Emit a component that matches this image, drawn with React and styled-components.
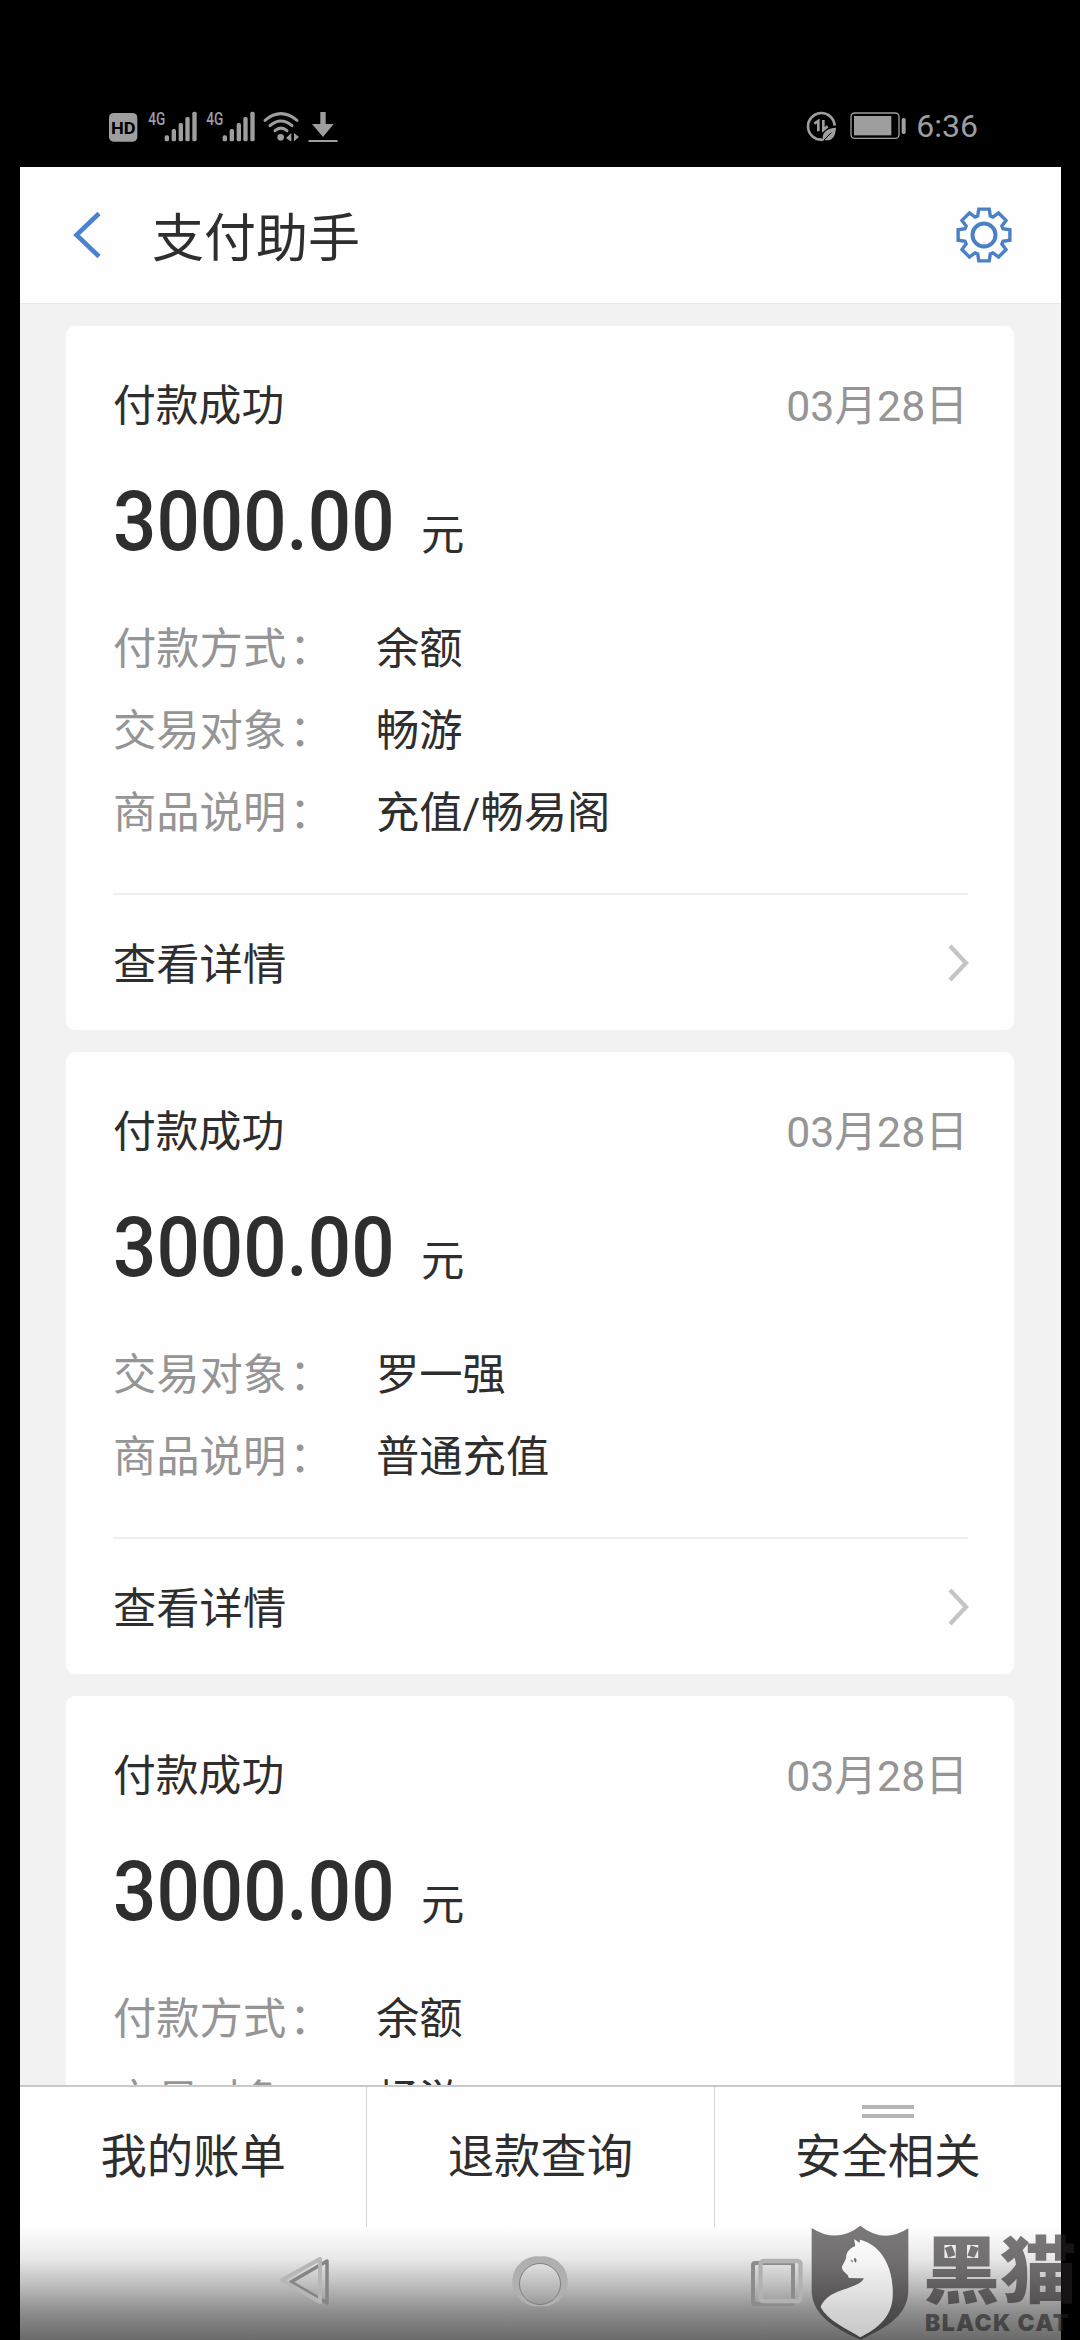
import React from 'react'
import styled, { createGlobalStyle } from 'styled-components'

const cards = [
  {
    date: '03月28日',
    amount: '3000.00',
    rows: [
      ['付款方式', '余额'],
      ['交易对象', '畅游'],
      ['商品说明', '充值/畅易阁'],
    ],
  },
  {
    date: '03月28日',
    amount: '3000.00',
    rows: [
      ['交易对象', '罗一强'],
      ['商品说明', '普通充值'],
    ],
  },
  {
    date: '03月28日',
    amount: '3000.00',
    rows: [
      ['付款方式', '余额'],
      ['交易对象', '畅游'],
    ],
  },
]

const gearPath = () => {
  const teeth = 8
  const points = []
  for (let i = 0; i < teeth; i++) {
    const mid = (i * 2 * Math.PI) / teeth
    const corners = [
      [-0.32, 20],
      [-0.2, 26.4],
      [0.2, 26.4],
      [0.32, 20],
    ]
    corners.forEach(([a, r]) => {
      points.push(`${(28 + r * Math.sin(mid + a)).toFixed(2)} ${(28 - r * Math.cos(mid + a)).toFixed(2)}`)
    })
  }
  return `M${points.join('L')}Z`
}

const Signal = () => (
  <svg width="49" height="31" viewBox="172 60 147 93" fill="#9e9e9e">
    <text x="173" y="101" fontSize="53" fontFamily="Roboto, sans-serif" fontWeight="500" textLength="51" lengthAdjust="spacingAndGlyphs">4G</text>
    <rect x="222" y="133" width="13" height="18" rx="5" />
    <rect x="243" y="114" width="13" height="37" rx="5" />
    <rect x="264" y="96" width="13" height="55" rx="5" />
    <rect x="284" y="78" width="13" height="73" rx="5" />
    <rect x="305" y="62" width="13" height="89" rx="5" />
  </svg>
)

export default function App() {
  return (
    <>
      <GlobalStyle />
      <Phone>
        <StatusBar>
          <StatusGroup $gap={9.5}>
            <svg width="29" height="31" viewBox="57 60 87 93">
              <rect x="57" y="66" width="85" height="86" rx="14" fill="#9e9e9e" />
              <text x="63" y="128" fontSize="51" fontFamily="Roboto, sans-serif" fontWeight="700" textLength="74" lengthAdjust="spacingAndGlyphs" fill="#000">HD</text>
            </svg>
            <Signal />
            <Signal />
            <WifiIcon width="36" height="31" viewBox="519 60 108 93" fill="none" stroke="#9e9e9e" strokeWidth="9" strokeLinecap="round">
              <path d="M525 88Q573 48 621 88" />
              <path d="M540 104Q573 76 606 104" />
              <path d="M555 119Q573 104 591 119" />
              <circle cx="572" cy="139" r="10" fill="#9e9e9e" stroke="none" />
              <path d="M604 126V152L588 141ZM612 126L627 138L612 151Z" fill="#9e9e9e" stroke="none" />
            </WifiIcon>
            <svg width="30" height="31" viewBox="653 60 90 93" fill="#9e9e9e">
              <path d="M690 63H706V99H730L698 138L665 99H690Z" />
              <rect x="654" y="147" width="88" height="6" rx="2" />
            </svg>
          </StatusGroup>
          <StatusGroup $gap={13}>
            <svg width="31" height="31" viewBox="74 61 93 93" fill="none" stroke="#9e9e9e" strokeWidth="8">
              <path d="M160 105A40 40 0 1 0 123 147" />
              <path d="M99 99L111 91V122M126 88V118L139 107" />
              <path d="M164 111C139 112 124 124 124 141L121 152L130 148C153 153 163 136 164 111Z" fill="#9e9e9e" stroke="none" />
              <path d="M128 148L150 126" stroke="#000" strokeWidth="3" />
            </svg>
            <svg width="57" height="28" viewBox="206 67 171 84" fill="#9e9e9e">
              <rect x="209" y="70" width="144" height="76" rx="11" fill="none" stroke="#9e9e9e" strokeWidth="4" />
              <rect x="218" y="79" width="112" height="58" />
              <rect x="361" y="85" width="12" height="48" rx="5" />
            </svg>
            <Clock>6:36</Clock>
          </StatusGroup>
        </StatusBar>
        <Screen>
          <Header>
            <svg width="28" height="44" viewBox="0 0 28 44">
              <path d="M26 .5L3.5 22L26 43.5" fill="none" stroke="#4a82d0" strokeWidth="4.6" />
            </svg>
            <Title>支付助手</Title>
            <svg width="56" height="56" viewBox="0 0 56 56" fill="none" stroke="#4a80c4" strokeWidth="3.4">
              <path d={gearPath()} />
              <circle cx="28" cy="28" r="11.5" strokeWidth="4" />
            </svg>
          </Header>
          <List>
            {cards.map((card, i) => (
              <Card key={i}>
                <CardTop>
                  <span>付款成功</span>
                  <DateText>{card.date}</DateText>
                </CardTop>
                <Amount>
                  <strong>{card.amount}</strong>
                  <span>元</span>
                </Amount>
                <Rows>
                  {card.rows.map(([label, value]) => (
                    <Row key={label}>
                      <Label>
                        {label}
                        <Colon>：</Colon>
                      </Label>
                      <span>{value}</span>
                    </Row>
                  ))}
                </Rows>
                <Detail>
                  <DetailText>查看详情</DetailText>
                  <svg width="22" height="38" viewBox="0 0 22 38">
                    <path d="M4 2L20 19L4 36" fill="none" stroke="#c4c4c4" strokeWidth="4.2" />
                  </svg>
                </Detail>
              </Card>
            ))}
          </List>
          <Tabs>
            <Tab>我的账单</Tab>
            <Tab>退款查询</Tab>
            <Tab>
              <Handle />
              安全相关
            </Tab>
          </Tabs>
          <NavBar>
            <svg width="52" height="54" viewBox="0 0 52 54" fill="none" strokeLinejoin="round">
              <path d="M13 30L49 9V51Z" stroke="#858585" strokeWidth="3.5" />
              <path d="M4 28L42 7V50Z" stroke="#b6b6b6" strokeWidth="4" />
            </svg>
            <svg width="50" height="54" viewBox="0 0 50 54">
              <path
                fillRule="evenodd"
                fill="#b0b0b0"
                d="M25 4.5A25 25 0 1 0 25 54.2A25 25 0 1 0 25 4.5ZM25 11.5A20.5 20.5 0 1 1 25 52.5A20.5 20.5 0 1 1 25 11.5Z"
              />
              <circle cx="25" cy="32" r="20.5" fill="none" stroke="#808080" strokeWidth="1" />
            </svg>
            <svg width="54" height="54" viewBox="0 0 54 54" fill="none">
              <rect x="3" y="11" width="40" height="41" rx="2" stroke="#8c8c8c" strokeWidth="4" />
              <rect x="10.5" y="9" width="40" height="40" rx="3" stroke="#b2b2b2" strokeWidth="4.4" />
            </svg>
          </NavBar>
        </Screen>
        <Watermark>
          <svg width="98" height="116" viewBox="62 74 294 348">
            <path
              fillRule="evenodd"
              fill="rgba(35,31,32,.6)"
              d="M64 83Q140 132 210 76Q280 132 354 84V268C354 345 290 380 210 418C125 380 64 340 64 268ZM192 117L208 128L209 118C265 132 310 190 307 285C306 350 262 385 210 411C165 382 113 362 91 320C115 260 205 270 221 234L176 233L172 224C165 216 155 212 155 200C158 190 168 180 168 168C170 152 183 142 195 138Z"
            />
            <path
              fill="rgba(255,255,255,.62)"
              d="M192 117L208 128L209 118C265 132 310 190 307 285C306 350 262 385 210 411C165 382 113 362 91 320C115 260 205 270 221 234L176 233L172 224C165 216 155 212 155 200C158 190 168 180 168 168C170 152 183 142 195 138Z"
            />
            <path d="M181 177L188 182L185 187ZM192 172Q203 175 196 187Q189 182 192 172Z" fill="#6d6b6b" />
          </svg>
          <Brand>
            <BrandName>黑猫</BrandName>
            <BrandSub>BLACK CAT</BrandSub>
          </Brand>
        </Watermark>
      </Phone>
    </>
  )
}

const GlobalStyle = createGlobalStyle`
  *{
    box-sizing: border-box;
  }
  body{
    margin: 0;
    background: #000;
  }
  svg{
    display: block;
    flex-shrink: 0;
    overflow: visible;
  }
`

const Phone = styled.div`
  position: relative;
  display: flex;
  flex-direction: column;
  width: 1080px;
  height: 2340px;
  overflow: hidden;
  background: #000;
  color: #2e2e2e;
  font-family: Roboto, 'Noto Sans CJK SC', sans-serif;
  font-size: 43.3px;
  line-height: 60px;
  white-space: nowrap;
`

const StatusBar = styled.div`
  display: flex;
  justify-content: space-between;
  align-items: center;
  height: 167px;
  padding: 85px 102px 0 109px;
`

const StatusGroup = styled.div`
  display: flex;
  align-items: center;
  gap: ${(p) => p.$gap}px;
`

const WifiIcon = styled.svg`
  margin-left: -2px;
`

const Clock = styled.span`
  margin-left: -4px;
  font-size: 32px;
  line-height: 32px;
  color: #9e9e9e;
`

const Screen = styled.div`
  display: flex;
  flex-direction: column;
  flex: 1;
  min-height: 0;
  width: 1041px;
  margin-left: 20px;
  background: #f2f2f2;
`

const Header = styled.header`
  display: flex;
  align-items: center;
  flex-shrink: 0;
  height: 137px;
  padding: 0 49px 0 53px;
  background: #fefefe;
  border-bottom: 1px solid #e8e8e8;
`

const Title = styled.h1`
  flex: 1;
  margin: 10px 0 0 51px;
  font-size: 52px;
  font-weight: 400;
  line-height: 76px;
`

const List = styled.main`
  display: flex;
  flex-direction: column;
  gap: 22px;
  flex: 1;
  min-height: 0;
  padding: 22px 47px 0 46px;
  overflow: hidden;
`

const Card = styled.section`
  flex-shrink: 0;
  padding: 50px 46px 0 47px;
  background: #fefefe;
  border-radius: 9px;
`

const CardTop = styled.div`
  display: flex;
  justify-content: space-between;
  font-size: 42.8px;
`

const DateText = styled.span`
  color: #959595;
`

const Amount = styled.div`
  display: flex;
  align-items: baseline;
  height: 100px;
  margin-top: 36px;
  line-height: 100px;
  strong{
    width: 308px;
    font-size: 83px;
    font-weight: 500;
    transform: scaleX(.92);
    transform-origin: left;
  }
`

const Rows = styled.div`
  padding: 36px 0 39px;
`

const Row = styled.div`
  display: flex;
  height: 82px;
  line-height: 84px;
`

const Label = styled.span`
  width: 263px;
  color: #959595;
`

const Colon = styled.span`
  margin-left: 3px;
`

const Detail = styled.div`
  display: flex;
  justify-content: space-between;
  align-items: center;
  height: 137px;
  border-top: 2px solid #f0f0f0;
`

const DetailText = styled.span`
  padding-top: 7px;
`

const Tabs = styled.nav`
  display: flex;
  flex-shrink: 0;
  height: 142px;
  background: #fefefe;
  border-top: 2px solid #c9c9c9;
`

const Tab = styled.div`
  position: relative;
  flex: 1;
  font-size: 46.4px;
  line-height: 140px;
  text-align: center;
  & + &{
    border-left: 1px solid #d4d4d4;
  }
`

const Handle = styled.i`
  position: absolute;
  top: 18px;
  left: calc(50% - 26px);
  width: 52px;
  height: 13px;
  border: solid #b5b5b5;
  border-width: 4px 0;
`

const NavBar = styled.div`
  display: flex;
  justify-content: center;
  flex-shrink: 0;
  gap: 185px;
  height: 113px;
  padding-top: 25px;
  background: linear-gradient(#fefefe, #e8e8e8 28%, #c4c4c4 48%, #8d8d8d 75%, #6a6a6a);
`

const Watermark = styled.div`
  position: absolute;
  left: 811px;
  top: 2225px;
  display: flex;
  gap: 14px;
`

const Brand = styled.div`
  color: rgba(35, 31, 32, .6);
`

const BrandName = styled.div`
  height: 82px;
  font-family: 'Noto Sans CJK SC', sans-serif;
  font-size: 77px;
  font-weight: 900;
  line-height: 82px;
  transform: scaleY(.94);
`

const BrandSub = styled.div`
  margin: 2px 0 0 2px;
  font-family: Inter, sans-serif;
  font-size: 23px;
  font-weight: 900;
  line-height: 28px;
  letter-spacing: 1.3px;
`
